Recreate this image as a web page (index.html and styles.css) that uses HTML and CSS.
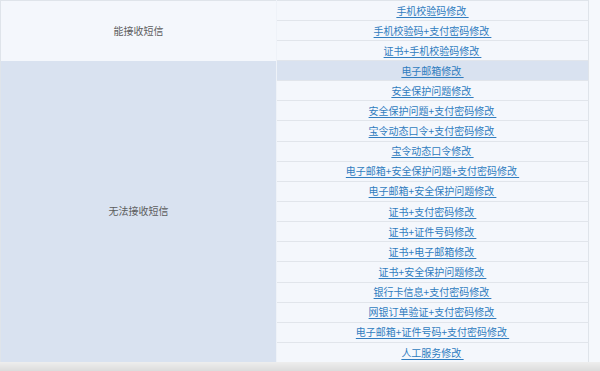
FILE: index.html
```html
<!DOCTYPE html>
<html lang="zh-CN">
<head>
<meta charset="utf-8">
<title>修改方式</title>
<link rel="stylesheet" href="styles.css">
</head>
<body>
<div class="page">
<table class="ways">
  <tbody class="grp grp-sms">
    <tr><td class="label" rowspan="3">能接收短信</td><td class="opt"><a href="#">手机校验码修改&nbsp;</a></td></tr>
    <tr><td class="opt"><a href="#">手机校验码+支付密码修改&nbsp;</a></td></tr>
    <tr><td class="opt"><a href="#">证书+手机校验码修改&nbsp;</a></td></tr>
  </tbody>
  <tbody class="grp grp-nosms">
    <tr><td class="label alt" rowspan="15">无法接收短信</td><td class="opt hl"><a href="#">电子邮箱修改&nbsp;</a></td></tr>
    <tr><td class="opt"><a href="#">安全保护问题修改&nbsp;</a></td></tr>
    <tr><td class="opt"><a href="#">安全保护问题+支付密码修改&nbsp;</a></td></tr>
    <tr><td class="opt"><a href="#">宝令动态口令+支付密码修改&nbsp;</a></td></tr>
    <tr><td class="opt"><a href="#">宝令动态口令修改&nbsp;</a></td></tr>
    <tr><td class="opt"><a href="#">电子邮箱+安全保护问题+支付密码修改&nbsp;</a></td></tr>
    <tr><td class="opt"><a href="#">电子邮箱+安全保护问题修改&nbsp;</a></td></tr>
    <tr><td class="opt"><a href="#">证书+支付密码修改&nbsp;</a></td></tr>
    <tr><td class="opt"><a href="#">证书+证件号码修改&nbsp;</a></td></tr>
    <tr><td class="opt"><a href="#">证书+电子邮箱修改&nbsp;</a></td></tr>
    <tr><td class="opt"><a href="#">证书+安全保护问题修改&nbsp;</a></td></tr>
    <tr><td class="opt"><a href="#">银行卡信息+支付密码修改&nbsp;</a></td></tr>
    <tr><td class="opt"><a href="#">网银订单验证+支付密码修改&nbsp;</a></td></tr>
    <tr><td class="opt"><a href="#">电子邮箱+证件号码+支付密码修改&nbsp;</a></td></tr>
    <tr><td class="opt"><a href="#">人工服务修改&nbsp;</a></td></tr>
  </tbody>
</table>
<div class="hscroll"></div>
</div>
</body>
</html>
```

FILE: styles.css
```css
html, body {
  margin: 0;
  padding: 0;
  background: #f5f8fc;
}
body {
  font-family: "Noto Sans CJK SC", "Noto Sans", sans-serif;
  font-size: 10px;
  overflow: hidden;
}
.page {
  width: 600px;
  height: 371px;
  display: flex;
  flex-direction: column;
}
.ways {
  border-collapse: collapse;
  width: 589px;
  table-layout: fixed;
  border-top: 1px solid #dfe4ea;
  border-left: 1px solid #dfe4ea;
  border-right: 1px solid #dfe4ea;
}
.ways td {
  padding: 0;
  text-align: center;
  vertical-align: middle;
  line-height: 12px;
}
.label {
  width: 275px;
  color: #5c5c5c;
  background: #f4f7fc;
  border-right: 1px solid #eef2f8;
}
.label.alt {
  background: #d9e2f0;
}
.opt {
  height: 19px;
  background: #f4f7fc;
  border-bottom: 1px solid #e1e5eb;
}
.grp-nosms .opt {
  height: 19.15px;
}
.opt.hl {
  background: #d9e2f0;
}
.grp-nosms tr:last-child .opt {
  border-bottom: none;
}
.opt a {
  color: #2f7cbf;
  text-decoration: underline;
  text-underline-offset: 2px;
}
.hscroll {
  flex: 1;
  background: linear-gradient(#eeeeee, #dcdcdc);
}
```
